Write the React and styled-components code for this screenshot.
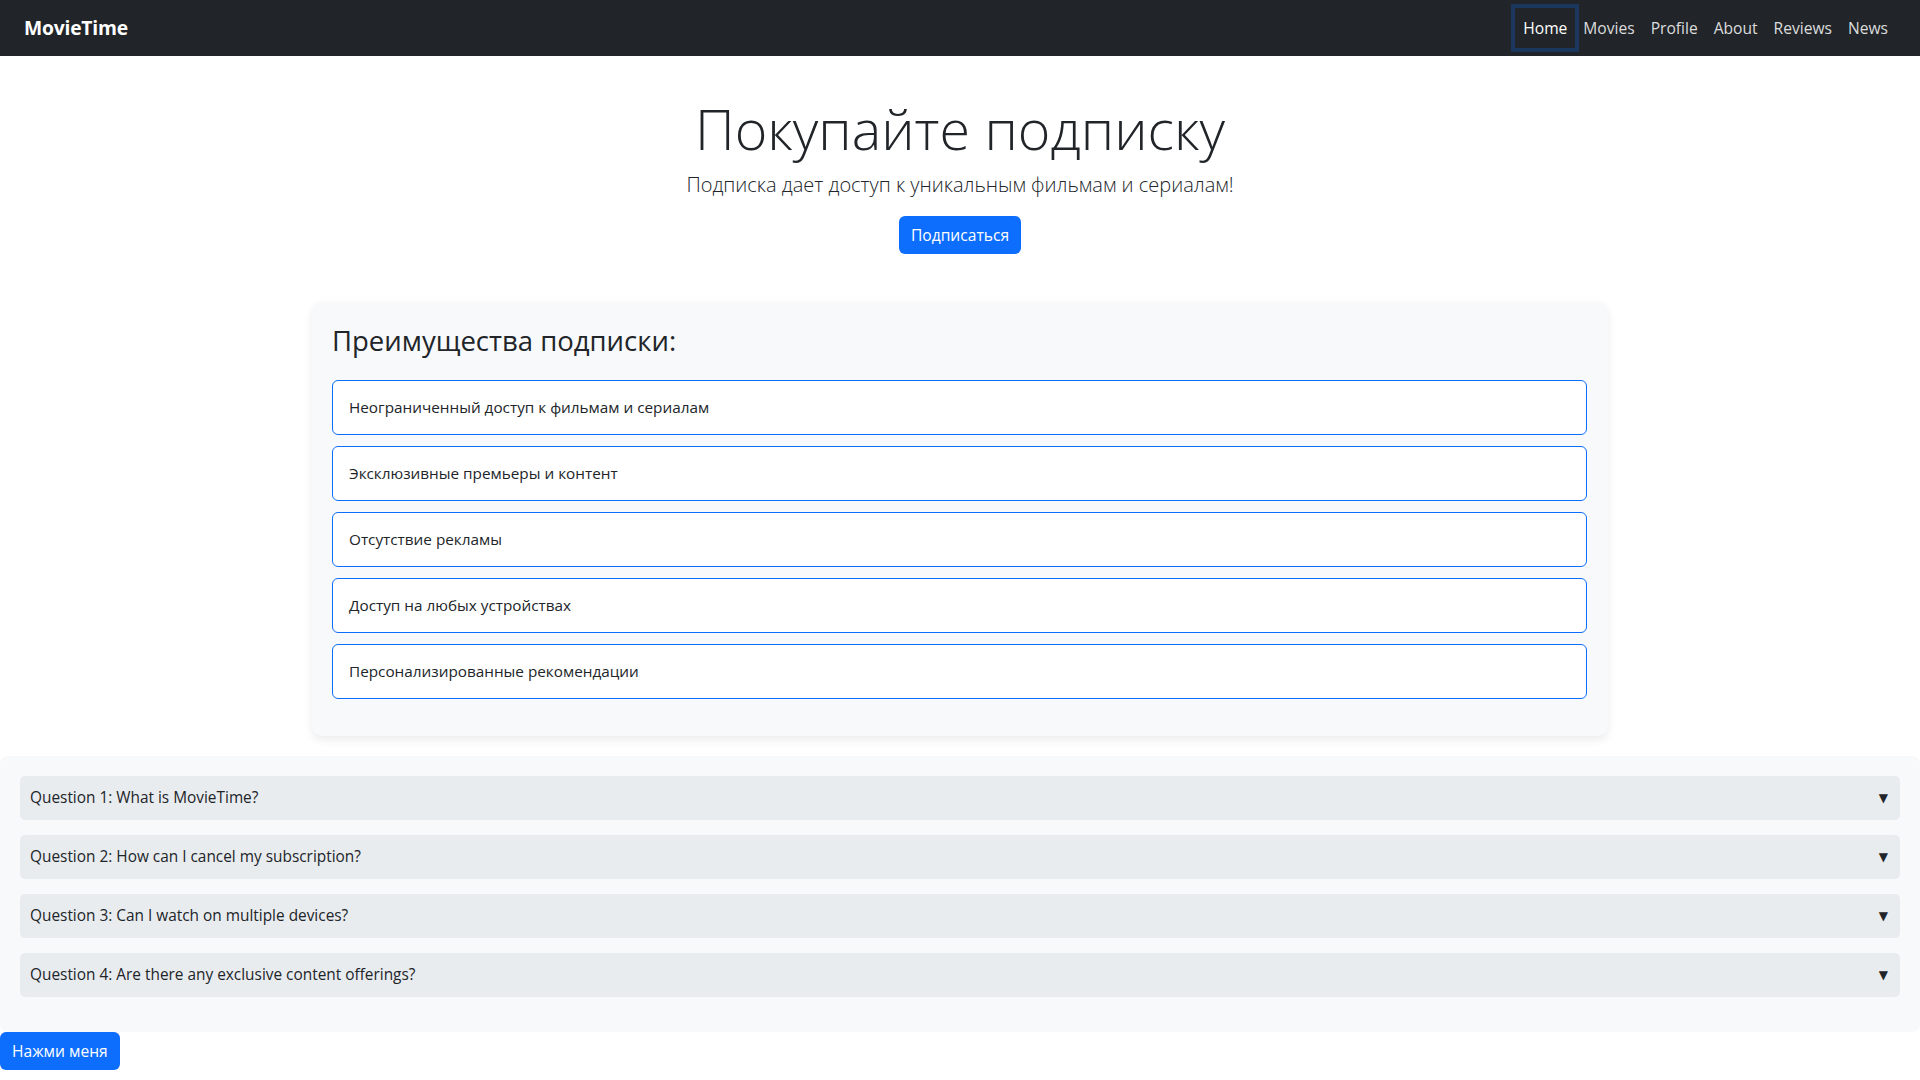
import React from 'react';
import styled, { createGlobalStyle } from 'styled-components';

const GlobalStyle = createGlobalStyle`
  * {
    box-sizing: border-box;
  }

  body {
    margin: 0;
    background: #fff;
    color: #212529;
    font-family: "Open Sans", "Noto Sans", "DejaVu Sans", sans-serif;
    font-size: 16px;
    line-height: 1.5;
  }
`;

const Navbar = styled.nav`
  height: 56px;
  padding: 0 24px;
  background: #212529;
  display: flex;
  align-items: center;
  justify-content: space-between;
`;

const Brand = styled.a`
  color: #fff;
  font-size: 19.3px;
  font-weight: 700;
  text-decoration: none;
  letter-spacing: -0.2px;
`;

const NavList = styled.ul`
  display: flex;
  margin: 0;
  padding: 0;
  list-style: none;
`;

const NavLink = styled.a`
  display: block;
  padding: 8px;
  line-height: 24px;
  font-size: 15.6px;
  color: ${(p) => (p.$active ? '#fff' : 'rgba(255, 255, 255, 0.85)')};
  text-decoration: none;
  box-shadow: ${(p) => (p.$active ? '0 0 0 4px #1c375e' : 'none')};
`;

const Hero = styled.section`
  padding-top: 39px;
  text-align: center;
`;

const HeroTitle = styled.h1`
  margin: 0 0 8px;
  font-size: 55.6px;
  font-weight: 300;
  line-height: 67px;
`;

const Lead = styled.p`
  margin: 0 0 16px;
  font-size: 20px;
  font-weight: 300;
  line-height: 30px;
  color: #212529;
`;

const PrimaryButton = styled.button`
  height: 38px;
  padding: 0 12px;
  border: none;
  border-radius: 6px;
  background: #0d6efd;
  color: #fff;
  font-family: inherit;
  font-size: 15.6px;
  line-height: 24px;
  cursor: pointer;
`;

const BenefitsCard = styled.div`
  width: 1296px;
  margin: 48px auto 20px;
  padding: 20px 21px 37px 20px;
  background: #f8f9fa;
  border-radius: 10px;
  box-shadow: 0 4px 10px rgba(0, 0, 0, 0.08);
`;

const CardTitle = styled.h2`
  margin: 0 0 20px;
  font-size: 27.5px;
  font-weight: 500;
  line-height: 38px;
`;

const BenefitList = styled.ul`
  display: flex;
  flex-direction: column;
  gap: 11px;
  margin: 0;
  padding: 0;
  list-style: none;
`;

const BenefitItem = styled.li`
  height: 55px;
  padding: 0 16px;
  display: flex;
  align-items: center;
  background: #fff;
  border: 1px solid #0d6efd;
  border-radius: 6px;
  font-size: 15.3px;
`;

const Faq = styled.section`
  padding: 20px 20px 35px;
  background: #f8f9fa;
  border-radius: 8px;
`;

const FaqItem = styled.div`
  height: 44px;
  margin-bottom: 15px;
  padding: 0 12px 0 10px;
  display: flex;
  align-items: center;
  justify-content: space-between;
  background: #e9ecef;
  border-radius: 5px;
  font-size: 15.4px;
  cursor: pointer;

  &:last-child {
    margin-bottom: 0;
  }
`;

const Caret = styled.span`
  font-size: 12px;
  line-height: 1;
  color: #212529;
`;

const links = ['Home', 'Movies', 'Profile', 'About', 'Reviews', 'News'];

const benefits = [
  'Неограниченный доступ к фильмам и сериалам',
  'Эксклюзивные премьеры и контент',
  'Отсутствие рекламы',
  'Доступ на любых устройствах',
  'Персонализированные рекомендации',
];

const questions = [
  'Question 1: What is MovieTime?',
  'Question 2: How can I cancel my subscription?',
  'Question 3: Can I watch on multiple devices?',
  'Question 4: Are there any exclusive content offerings?',
];

const App = () => (
  <>
    <GlobalStyle />
    <Navbar>
      <Brand href="#">MovieTime</Brand>
      <NavList>
        {links.map((link) => (
          <li key={link}>
            <NavLink href="#" $active={link === 'Home'}>{link}</NavLink>
          </li>
        ))}
      </NavList>
    </Navbar>

    <Hero>
      <HeroTitle>Покупайте подписку</HeroTitle>
      <Lead>Подписка дает доступ к уникальным фильмам и сериалам!</Lead>
      <PrimaryButton>Подписаться</PrimaryButton>
    </Hero>

    <BenefitsCard>
      <CardTitle>Преимущества подписки:</CardTitle>
      <BenefitList>
        {benefits.map((b) => <BenefitItem key={b}>{b}</BenefitItem>)}
      </BenefitList>
    </BenefitsCard>

    <Faq>
      {questions.map((q) => (
        <FaqItem key={q}>
          <span>{q}</span>
          <Caret>▼</Caret>
        </FaqItem>
      ))}
    </Faq>

    <PrimaryButton>Нажми меня</PrimaryButton>
  </>
);

export default App;
